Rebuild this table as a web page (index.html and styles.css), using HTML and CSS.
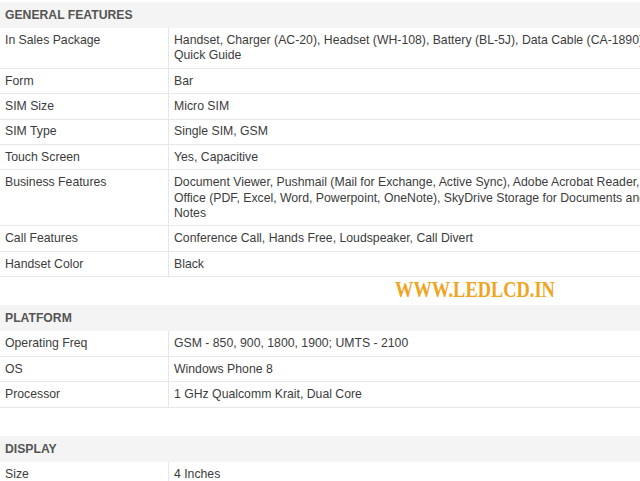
FILE: index.html
```html
<!DOCTYPE html>
<html>
<head>
<meta charset="utf-8">
<link rel="stylesheet" href="styles.css">
</head>
<body>
<div class="specs">
  <section class="group">
    <h3 class="group-title">GENERAL FEATURES</h3>
    <table class="spec-table">
      <tr><td class="key">In Sales Package</td><td class="val">Handset, Charger (AC-20), Headset (WH-108), Battery (BL-5J), Data Cable (CA-1890), Quick Guide</td></tr>
      <tr><td class="key">Form</td><td class="val">Bar</td></tr>
      <tr><td class="key">SIM Size</td><td class="val">Micro SIM</td></tr>
      <tr><td class="key">SIM Type</td><td class="val">Single SIM, GSM</td></tr>
      <tr><td class="key">Touch Screen</td><td class="val">Yes, Capacitive</td></tr>
      <tr><td class="key">Business Features</td><td class="val">Document Viewer, Pushmail (Mail for Exchange, Active Sync), Adobe Acrobat Reader, Office (PDF, Excel, Word, Powerpoint, OneNote), SkyDrive Storage for Documents and Notes</td></tr>
      <tr><td class="key">Call Features</td><td class="val">Conference Call, Hands Free, Loudspeaker, Call Divert</td></tr>
      <tr><td class="key">Handset Color</td><td class="val">Black</td></tr>
    </table>
  </section>
  <section class="group">
    <h3 class="group-title">PLATFORM</h3>
    <table class="spec-table">
      <tr><td class="key">Operating Freq</td><td class="val">GSM - 850, 900, 1800, 1900; UMTS - 2100</td></tr>
      <tr><td class="key">OS</td><td class="val">Windows Phone 8</td></tr>
      <tr><td class="key">Processor</td><td class="val">1 GHz Qualcomm Krait, Dual Core</td></tr>
    </table>
  </section>
  <section class="group">
    <h3 class="group-title">DISPLAY</h3>
    <table class="spec-table">
      <tr><td class="key">Size</td><td class="val">4 Inches</td></tr>
    </table>
  </section>
  <div class="watermark">WWW.LEDLCD.IN</div>
</div>
</body>
</html>
```
FILE: styles.css
```css
html, body {
  margin: 0;
  padding: 0;
  background: #fff;
  overflow: hidden;
}
.specs {
  position: relative;
  width: 668px;
  padding-top: 2px;
  font-family: "Liberation Sans", Arial, sans-serif;
  font-size: 12.25px;
  color: #3c3c3c;
}
.group {
  margin-bottom: 28px;
}
.group-title {
  margin: 0;
  padding: 6px 5px 4.9px;
  background: #f4f4f4;
  font-size: 12.2px;
  line-height: 15.3px;
  font-weight: bold;
  color: #555;
}
.spec-table {
  width: 100%;
  border-collapse: collapse;
  table-layout: fixed;
}
.spec-table td {
  padding: 4.8px 5px 4.3px;
  line-height: 15.3px;
  vertical-align: top;
  border-bottom: 1px solid #e8e8e8;
}
.spec-table .key {
  width: 158px;
  border-right: 1px solid #e6e6e6;
}
.watermark {
  position: absolute;
  left: 395px;
  top: 277px;
  font-family: "Liberation Serif", "DejaVu Serif", serif;
  font-weight: bold;
  font-size: 23px;
  transform: scaleX(0.8);
  transform-origin: left top;
  color: #efa51f;
}
```
